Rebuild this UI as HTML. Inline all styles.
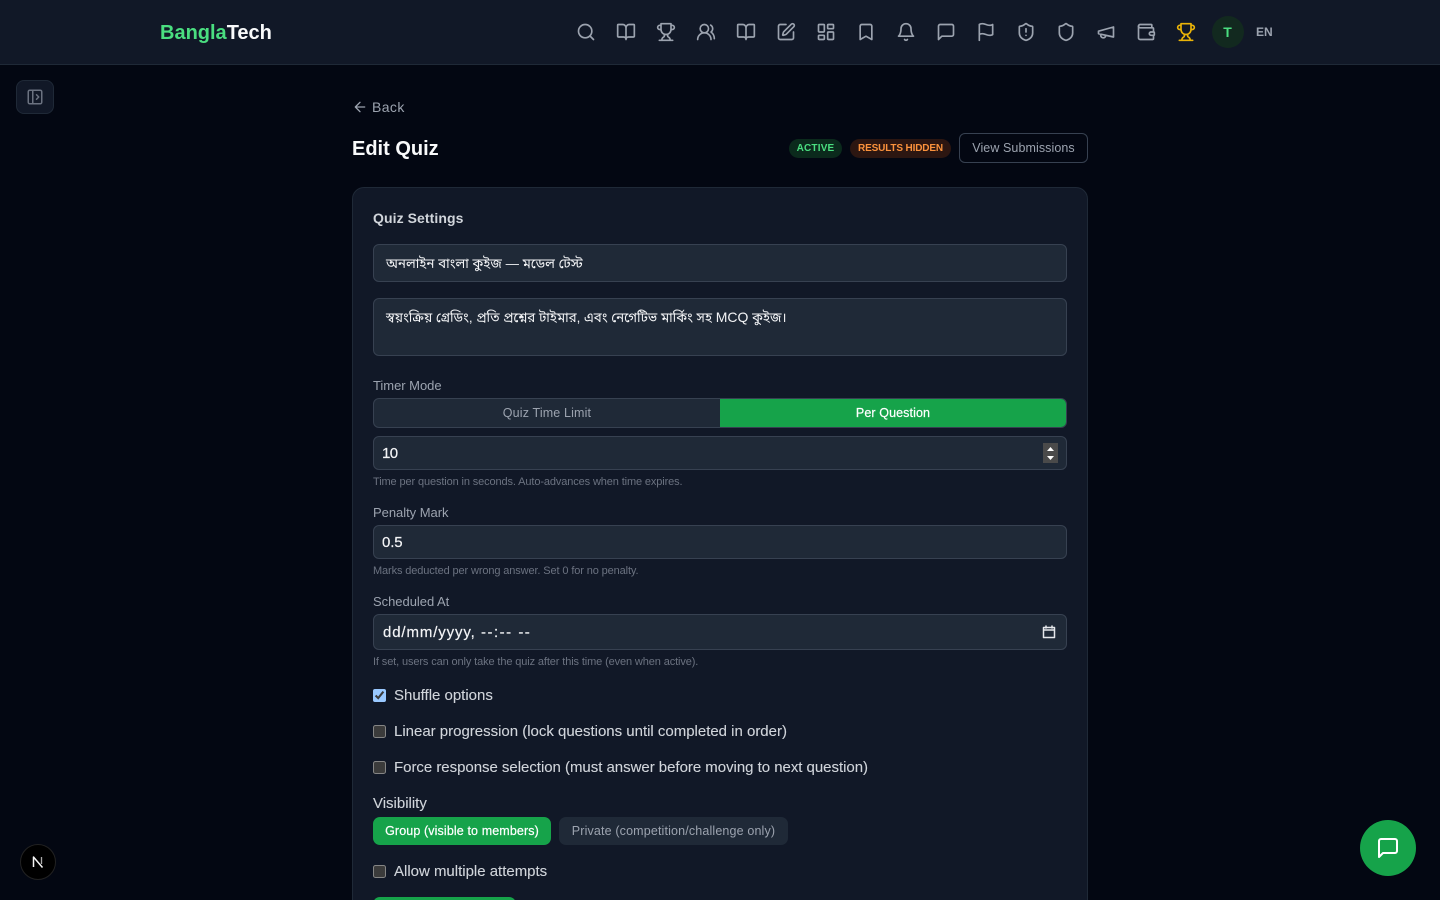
<!DOCTYPE html>
<html lang="en"><head><meta charset="utf-8"><title>Edit Quiz</title>
<style>
*{box-sizing:border-box;margin:0;padding:0}
html,body{width:1440px;height:900px;overflow:hidden;background:#030712;color-scheme:dark}
body{position:relative;font-family:"Liberation Sans","Noto Sans CJK SC",sans-serif}
.a{position:absolute}
.t{position:absolute;white-space:nowrap;line-height:20px;height:20px}
.box{position:absolute;background:#1f2937;border:1px solid #374151;border-radius:6px}
svg{position:absolute;fill:none;stroke-linecap:round;stroke-linejoin:round}
.n{stroke:#9ca3af;stroke-width:2;width:20px;height:20px;top:22px}
input[type=checkbox]{position:absolute;width:13px;height:13px;margin:0;accent-color:#99c8ff}
.lb{font-size:13px;color:#9ca3af;letter-spacing:-.03px}
.hp{font-size:11px;color:#6b7280;letter-spacing:-.12px}
.ck{font-size:15px;color:#d1d5db;letter-spacing:-.01px;-webkit-text-stroke:.1px #d1d5db}
.val{font-size:15px;color:#f3f4f6;letter-spacing:-.1px;-webkit-text-stroke:.2px #f3f4f6}
.bn{font-size:13.350px;color:#f3f4f6;font-family:'Liberation Sans','Noto Sans Bengali','Lohit Bengali',FreeSerif,sans-serif}
.bn span{font-size:14px}
.m{-webkit-text-stroke:.2px #fff}
</style></head><body>
<div class="a" style="left:0;top:0;width:1440px;height:65px;background:#111827;border-bottom:1px solid #1f2937"></div>
<div class="t" style="left:160px;top:23px;font-size:20px;font-weight:700;color:#4ade80">Bangla<span style="color:#f9fafb">Tech</span></div>

<svg class="n" style="left:576px" viewBox="0 0 24 24"><circle cx="11" cy="11" r="8"/><path d="m21 21-4.35-4.35"/></svg>
<svg class="n" style="left:616px" viewBox="0 0 24 24"><path d="M12 7v14M3 18a1 1 0 0 1-1-1V4a1 1 0 0 1 1-1h5a4 4 0 0 1 4 4 4 4 0 0 1 4-4h5a1 1 0 0 1 1 1v13a1 1 0 0 1-1 1h-6a3 3 0 0 0-3 3 3 3 0 0 0-3-3z"/></svg>
<svg class="n" style="left:656px" viewBox="0 0 24 24"><path d="M6 9H4.500a2.500 2.500 0 0 1 0-5H6M18 9h1.500a2.500 2.500 0 0 0 0-5H18M4 22h16M10 14.660V17c0 .55-.47.98-.97 1.210C7.850 18.750 7 20.240 7 22M14 14.660V17c0 .55.47.98.97 1.210C16.150 18.750 17 20.240 17 22M18 2H6v7a6 6 0 0 0 12 0V2Z"/></svg>
<svg class="n" style="left:696px" viewBox="0 0 24 24"><path d="M18 21a8 8 0 0 0-16 0"/><circle cx="10" cy="8" r="5"/><path d="M22 20c0-3.370-2-6.500-4-8a5 5 0 0 0-.45-8.300"/></svg>
<svg class="n" style="left:736px" viewBox="0 0 24 24"><path d="M12 7v14M3 18a1 1 0 0 1-1-1V4a1 1 0 0 1 1-1h5a4 4 0 0 1 4 4 4 4 0 0 1 4-4h5a1 1 0 0 1 1 1v13a1 1 0 0 1-1 1h-6a3 3 0 0 0-3 3 3 3 0 0 0-3-3z"/></svg>
<svg class="n" style="left:776px" viewBox="0 0 24 24"><path d="M12 3H5a2 2 0 0 0-2 2v14a2 2 0 0 0 2 2h14a2 2 0 0 0 2-2v-7"/><path d="M18.375 2.625a1 1 0 0 1 3 3l-9.013 9.014a2 2 0 0 1-.853.505l-2.873.84a.5.5 0 0 1-.62-.62l.84-2.873a2 2 0 0 1 .506-.852z"/></svg>
<svg class="n" style="left:816px" viewBox="0 0 24 24"><rect x="3" y="3" width="7" height="9" rx="1"/><rect x="14" y="3" width="7" height="5" rx="1"/><rect x="14" y="12" width="7" height="9" rx="1"/><rect x="3" y="16" width="7" height="5" rx="1"/></svg>
<svg class="n" style="left:856px" viewBox="0 0 24 24"><path d="m19 21-7-4-7 4V5a2 2 0 0 1 2-2h10a2 2 0 0 1 2 2v16z"/></svg>
<svg class="n" style="left:896px" viewBox="0 0 24 24"><path d="M6 8a6 6 0 0 1 12 0c0 7 3 9 3 9H3s3-2 3-9M10.300 21a1.940 1.940 0 0 0 3.400 0"/></svg>
<svg class="n" style="left:936px" viewBox="0 0 24 24"><path d="M21 15a2 2 0 0 1-2 2H7l-4 4V5a2 2 0 0 1 2-2h14a2 2 0 0 1 2 2z"/></svg>
<svg class="n" style="left:976px" viewBox="0 0 24 24"><path d="M4 15s1-1 4-1 5 2 8 2 4-1 4-1V3s-1 1-4 1-5-2-8-2-4 1-4 1zM4 22v-7"/></svg>
<svg class="n" style="left:1016px" viewBox="0 0 24 24"><path d="M20 13c0 5-3.500 7.500-7.660 8.950a1 1 0 0 1-.67-.01C7.500 20.500 4 18 4 13V6a1 1 0 0 1 1-1c2 0 4.500-1.200 6.240-2.720a1.170 1.170 0 0 1 1.520 0C14.510 3.810 17 5 19 5a1 1 0 0 1 1 1zM12 8v4M12 16h.01"/></svg>
<svg class="n" style="left:1056px" viewBox="0 0 24 24"><path d="M20 13c0 5-3.500 7.500-7.660 8.950a1 1 0 0 1-.67-.01C7.500 20.500 4 18 4 13V6a1 1 0 0 1 1-1c2 0 4.500-1.200 6.240-2.720a1.170 1.170 0 0 1 1.520 0C14.510 3.810 17 5 19 5a1 1 0 0 1 1 1z"/></svg>
<svg class="n" style="left:1096px" viewBox="0 0 24 24"><path d="m3 11 18-5v12L3 14v-3zM11.600 16.800a3 3 0 1 1-5.800-1.600"/></svg>
<svg class="n" style="left:1136px" viewBox="0 0 24 24"><path d="M19 7V4a1 1 0 0 0-1-1H5a2 2 0 0 0 0 4h15a1 1 0 0 1 1 1v4h-3a2 2 0 0 0 0 4h3a1 1 0 0 0 1-1v-2a1 1 0 0 0-1-1"/><path d="M3 5v14a2 2 0 0 0 2 2h15a1 1 0 0 0 1-1v-4"/></svg>
<svg class="n" style="left:1176px;stroke:#eab308" viewBox="0 0 24 24"><path d="M6 9H4.500a2.500 2.500 0 0 1 0-5H6M18 9h1.500a2.500 2.500 0 0 0 0-5H18M4 22h16M10 14.660V17c0 .55-.47.98-.97 1.210C7.850 18.750 7 20.240 7 22M14 14.660V17c0 .55.47.98.97 1.210C16.150 18.750 17 20.240 17 22M18 2H6v7a6 6 0 0 0 12 0V2Z"/></svg>
<div class="a" style="left:1212px;top:16px;width:32px;height:32px;border-radius:50%;background:#12291f"></div>
<div class="t" style="left:1212px;width:31px;text-align:center;top:22px;font-size:14px;font-weight:700;color:#4ade80">T</div>
<div class="t" style="left:1256px;top:22px;font-size:12px;font-weight:700;color:#9ca3af">EN</div>

<div class="a" style="left:16px;top:80px;width:38px;height:34px;border-radius:8px;background:#111827;border:1px solid #1f2937"></div>
<svg style="left:26px;top:88px;width:18px;height:18px;stroke:#6b7280;stroke-width:2" viewBox="0 0 24 24"><rect x="3" y="3" width="18" height="18" rx="2"/><path d="M9 3v18m5-12 3 3-3 3"/></svg>

<svg style="left:352px;top:99px;width:16px;height:16px;stroke:#9ca3af;stroke-width:2" viewBox="0 0 24 24"><path d="m12 19-7-7 7-7M19 12H5"/></svg>
<div class="t" style="left:372px;top:97px;font-size:14px;color:#9ca3af;letter-spacing:.4px">Back</div>
<div class="t" style="left:352px;top:139px;font-size:20px;font-weight:700;color:#f9fafb">Edit Quiz</div>

<div class="a" style="left:789px;top:139px;width:53px;height:19px;border-radius:10px;background:#0b2a1c"></div>
<div class="t" style="left:789px;width:53px;text-align:center;top:139px;font-size:10px;font-weight:700;color:#4ade80;letter-spacing:.2px">ACTIVE</div>
<div class="a" style="left:850px;top:139px;width:101px;height:19px;border-radius:10px;background:#2c1611"></div>
<div class="t" style="left:850px;width:101px;text-align:center;top:139px;font-size:10px;font-weight:700;color:#fb923c;letter-spacing:-.15px">RESULTS HIDDEN</div>
<div class="a" style="left:959px;top:133px;width:129px;height:30px;border-radius:6px;border:1px solid #374151"></div>
<div class="t" style="left:959px;width:129px;text-align:center;top:138px;font-size:12.500px;color:#9ca3af;letter-spacing:.08px">View Submissions</div>

<div class="a" style="left:352px;top:187px;width:736px;height:800px;background:#111827;border:1px solid #1f2937;border-radius:12px"></div>
<div class="t" style="left:373px;top:208px;font-size:14px;font-weight:700;color:#d1d5db;letter-spacing:.08px">Quiz Settings</div>

<div class="box" style="left:373px;top:244px;width:694px;height:38px"></div>
<div class="t bn" style="left:386px;top:254px">অনলাইন বাংলা কুইজ — মডেল টেস্ট</div>
<div class="box" style="left:373px;top:298px;width:694px;height:58px"></div>
<div class="t bn" style="left:386px;top:307px">স্বয়ংক্রিয় গ্রেডিং, প্রতি প্রশ্নের টাইমার, এবং নেগেটিভ মার্কিং সহ <span>MCQ</span> কুইজ।</div>

<div class="t lb" style="left:373px;top:376px">Timer Mode</div>
<div class="box" style="left:373px;top:398px;width:694px;height:30px"></div>
<div class="a" style="left:720px;top:399px;width:346px;height:28px;background:#16a34a;border-radius:0 5px 5px 0"></div>
<div class="t" style="left:374px;width:346px;text-align:center;top:403px;font-size:12.500px;color:#9ca3af;letter-spacing:.15px">Quiz Time Limit</div>
<div class="t m" style="left:720px;width:346px;text-align:center;top:403px;font-size:12.500px;color:#fff;letter-spacing:.1px">Per Question</div>

<div class="box" style="left:373px;top:436px;width:694px;height:34px"></div>
<div class="t val" style="left:382px;top:444px;letter-spacing:-.6px">10</div>
<div class="a" style="left:1043px;top:443px;width:15px;height:20px;background:#4a4a4a"></div>
<svg style="left:1043px;top:443px;width:15px;height:20px" viewBox="0 0 15 20"><path d="M7.500 4 11 8H4zM7.500 17 4 13h7z" fill="#fff"/></svg>
<div class="t hp" style="left:373px;top:472px">Time per question in seconds. Auto-advances when time expires.</div>

<div class="t lb" style="left:373px;top:503px">Penalty Mark</div>
<div class="box" style="left:373px;top:525px;width:694px;height:34px"></div>
<div class="t val" style="left:382px;top:533px">0.5</div>
<div class="t hp" style="left:373px;top:561px">Marks deducted per wrong answer. Set 0 for no penalty.</div>

<div class="t lb" style="left:373px;top:592px">Scheduled At</div>
<div class="box" style="left:373px;top:614px;width:694px;height:36px"></div>
<div class="t val" style="left:383px;top:623px;letter-spacing:.87px">dd/mm/yyyy,</div>
<div class="t val" style="left:481px;top:623px;letter-spacing:1.500px">--:-- --</div>
<svg style="left:1042px;top:625px;width:14px;height:14px" viewBox="0 0 14 14"><path d="M1.500 2.500h11v10h-11zM1.500 5h11" stroke="#e5e7eb" stroke-width="1.500"/><path d="M4 1v2M10 1v2" stroke="#e5e7eb" stroke-width="1.500"/></svg>
<div class="t hp" style="left:373px;top:652px">If set, users can only take the quiz after this time (even when active).</div>

<input type="checkbox" checked style="left:373px;top:689px">
<div class="t ck" style="left:394px;top:686px">Shuffle options</div>
<input type="checkbox" style="left:373px;top:725px">
<div class="t ck" style="left:394px;top:722px">Linear progression (lock questions until completed in order)</div>
<input type="checkbox" style="left:373px;top:761px">
<div class="t ck" style="left:394px;top:758px;letter-spacing:-.03px">Force response selection (must answer before moving to next question)</div>
<div class="t ck" style="left:373px;top:794px">Visibility</div>
<div class="a" style="left:373px;top:817px;width:178px;height:28px;border-radius:7px;background:#16a34a"></div>
<div class="t m" style="left:373px;width:178px;text-align:center;top:821px;font-size:12.500px;color:#fff;letter-spacing:.12px">Group (visible to members)</div>
<div class="a" style="left:559px;top:817px;width:229px;height:28px;border-radius:7px;background:#1f2937"></div>
<div class="t" style="left:559px;width:229px;text-align:center;top:821px;font-size:12.500px;color:#9ca3af;letter-spacing:.15px">Private (competition/challenge only)</div>
<input type="checkbox" style="left:373px;top:865px">
<div class="t ck" style="left:394px;top:862px">Allow multiple attempts</div>
<div class="a" style="left:373px;top:897px;width:143px;height:34px;border-radius:7px;background:#16a34a"></div>

<div class="a" style="left:20px;top:844px;width:36px;height:36px;border-radius:50%;background:#000;border:1px solid #222"></div>
<svg style="left:31px;top:855px;width:14px;height:14px" viewBox="0 0 14 14"><path d="M2.500 12V2l9 10.500" stroke="#f5f5f5" stroke-width="1.500" stroke-linecap="butt"/><path d="M10.500 2v7" stroke="#aaa" stroke-width="1.300" stroke-linecap="butt"/></svg>

<div class="a" style="left:1360px;top:820px;width:56px;height:56px;border-radius:50%;background:#16a34a"></div>
<svg style="left:1376px;top:836px;width:24px;height:24px;stroke:#fff;stroke-width:2" viewBox="0 0 24 24"><path d="M21 15a2 2 0 0 1-2 2H7l-4 4V5a2 2 0 0 1 2-2h14a2 2 0 0 1 2 2z"/></svg>
</body></html>
